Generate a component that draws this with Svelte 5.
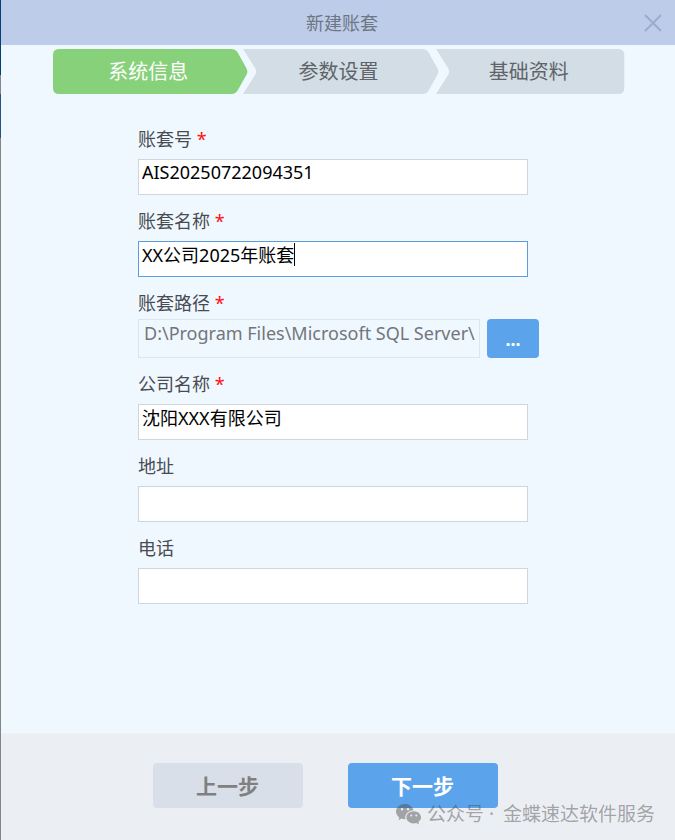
<script>
  import { onMount } from 'svelte';

  const steps = [
    { label: '系统信息', active: true, shape: 'M6 0H178Q182 0 184 3L193 19Q195 23 193 26L184 42Q182 45 178 45H6Q0 45 0 39V6Q0 0 6 0Z' },
    { label: '参数设置', active: false, shape: 'M0 0H179Q183 0 185 3L194 19Q196 23 194 26L185 42Q183 45 179 45H0L12 26Q14 23 12 19Z' },
    { label: '基础资料', active: false, shape: 'M2 0H184Q190 0 190 6V39Q190 45 184 45H2L14 26Q16 23 14 19Z' },
  ];

  let accountNo = $state('AIS20250722094351');
  let accountName = $state('XX公司2025年账套');
  let path = $state('D:\\Program Files\\Microsoft SQL Server\\');
  let company = $state('沈阳XXX有限公司');
  let address = $state('');
  let phone = $state('');

  let nameInput;
  let caretLeft = $state(0);

  // put the caret right behind the typed text
  const moveCaret = () => {
    const ctx = document.createElement('canvas').getContext('2d');
    ctx.font = getComputedStyle(nameInput).font;
    caretLeft = Math.round(ctx.measureText(accountName).width) + 4;
  };

  onMount(moveCaret);
</script>

<svelte:head>
  <title>新建账套</title>
</svelte:head>

<div class="dialog">
  <header class="titlebar">
    <h1>新建账套</h1>
    <button class="close" type="button" aria-label="关闭">
      <svg viewBox="0 0 18 18" width="18" height="18"><path d="M1 1L17 17M17 1L1 17" /></svg>
    </button>
  </header>

  <ol class="steps">
    {#each steps as step}
      <li class="step" class:active={step.active}>
        <svg viewBox="0 0 190 45" preserveAspectRatio="none" aria-hidden="true"><path d={step.shape} /></svg>
        <span>{step.label}</span>
      </li>
    {/each}
  </ol>

  <form class="form" id="account-form">
    <div class="field">
      <label for="account-no">账套号 <b>*</b></label>
      <input id="account-no" type="text" bind:value={accountNo}>
    </div>
    <div class="field">
      <label for="account-name">账套名称 <b>*</b></label>
      <div class="caret-box">
        <input id="account-name" class="current" type="text" bind:this={nameInput} bind:value={accountName} oninput={moveCaret}>
        <i class="caret" style="left: {caretLeft}px"></i>
      </div>
    </div>
    <div class="field path">
      <label for="path">账套路径 <b>*</b></label>
      <div class="path-row">
        <input id="path" type="text" readonly bind:value={path}>
        <button class="browse" type="button" aria-label="浏览">...</button>
      </div>
    </div>
    <div class="field">
      <label for="company">公司名称 <b>*</b></label>
      <input id="company" type="text" bind:value={company}>
    </div>
    <div class="field">
      <label for="address">地址</label>
      <input id="address" type="text" bind:value={address}>
    </div>
    <div class="field">
      <label for="phone">电话</label>
      <input id="phone" type="text" bind:value={phone}>
    </div>
  </form>

  <footer class="footer">
    <button class="prev" type="button">上一步</button>
    <button class="next" type="button">下一步</button>
  </footer>

  <div class="watermark">
    <svg viewBox="0 0 26 21" width="26" height="21" aria-hidden="true">
      <path fill-rule="evenodd" d="M9 0C4 0 0 3.4 0 7.6C0 10 1.3 12.1 3.3 13.5L2.5 16.2L5.6 14.6C6.8 15 8 15.2 9.4 15.2C8.3 10.5 12.3 6.3 17.5 6.2C16.6 2.6 13.2 0 9 0ZM6 4A1.2 1.2 0 1 1 6 6.4A1.2 1.2 0 1 1 6 4ZM12 4A1.2 1.2 0 1 1 12 6.4A1.2 1.2 0 1 1 12 4Z" />
      <path fill-rule="evenodd" d="M17.8 7.2C13.6 7.2 10.4 10 10.4 13.3C10.4 16.7 13.7 19.4 17.8 19.4C18.7 19.4 19.5 19.3 20.3 19L23 20.6L22.3 18.1C24 17 25 15.3 25 13.3C25 10 21.8 7.2 17.8 7.2ZM15.3 10.4A1 1 0 1 1 15.3 12.4A1 1 0 1 1 15.3 10.4ZM20.3 10.4A1 1 0 1 1 20.3 12.4A1 1 0 1 1 20.3 10.4Z" />
    </svg>
    <span>公众号 ·</span>
    <span class="account">金蝶速达软件服务</span>
  </div>
</div>

<style>
  :global(body) {
    background: #f0f8ff;
  }

  .dialog {
    position: relative;
    display: flex;
    flex-direction: column;
    box-sizing: border-box;
    min-height: 100vh;
    padding-left: 1px;
    background: linear-gradient(#004275 0 75px, #8b8587 75px 94px, #2b527e 94px 138px, #858585 138px) left / 1px 100% no-repeat, #f0f8ff;
    color: #484c52;
    font: 18px/24px "Noto Sans", "Noto Sans CJK SC", sans-serif;
  }

  button,
  input {
    box-sizing: border-box;
    font: inherit;
  }

  button {
    padding: 0;
    border: 0;
    cursor: pointer;
  }

  .titlebar {
    display: grid;
    grid-template-columns: 44px 1fr 44px;
    align-items: center;
    height: 45px;
    background: #bdcce9;
  }

  h1 {
    grid-column: 2;
    margin: 0;
    padding-left: 8px;
    color: #6d7683;
    font-size: 18px;
    font-weight: 400;
    text-align: center;
  }

  .close {
    display: grid;
    place-items: center;
    height: 45px;
    background: none;
  }

  .close path {
    fill: none;
    stroke: #98aecb;
    stroke-width: 2;
  }

  .steps {
    display: grid;
    grid-template-columns: repeat(3, 1fr);
    margin: 4px 51px 33px 52px;
    padding: 0;
    list-style: none;
  }

  .step {
    display: grid;
    height: 45px;
    color: #5f646a;
    font-size: 20px;
    line-height: 26px;
    text-align: center;
  }

  .step svg,
  .step span {
    grid-area: 1 / 1;
    align-self: center;
  }

  .step svg {
    width: 100%;
    height: 45px;
    overflow: visible;
    fill: #d3dde5;
  }

  .step span {
    z-index: 1;
  }

  .active {
    color: #fff;
  }

  .active svg {
    fill: #87d17a;
  }

  .form {
    display: flex;
    flex: 1;
    flex-direction: column;
    gap: 14px;
    padding: 0 136px 24px 137px;
  }

  .field {
    display: flex;
    flex-direction: column;
    gap: 8px;
    margin-right: 11px;
  }

  .field b {
    color: #f11;
    font-weight: 400;
  }

  input {
    width: 100%;
    height: 36px;
    padding: 0 3px 10px;
    border: 1px solid #cdd5de;
    border-radius: 0;
    outline: 0;
    background: #fff;
    color: #000;
  }

  .current {
    border-color: #5b9ddd;
  }

  .caret-box {
    position: relative;
    display: flex;
  }

  .caret {
    position: absolute;
    top: 2px;
    width: 1px;
    height: 23px;
    background: #000;
  }

  .field.path {
    gap: 4px;
    margin-right: 0;
  }

  .path-row {
    display: flex;
    gap: 7px;
  }

  .path-row input {
    flex: 1;
    min-width: 0;
    height: 39px;
    padding: 0 3px 12px 5px;
    border-color: #dde5ee;
    background: #f0f8ff;
    color: #72767b;
  }

  .browse {
    width: 52px;
    height: 39px;
    border-radius: 4px;
    background: #5ba4eb;
    color: #fff;
    font-weight: 700;
  }

  .footer {
    display: flex;
    justify-content: center;
    gap: 45px;
    padding: 29px 26px 32px 0;
    border-top: 1px solid #edf1f6;
    background: #ebeef3;
  }

  .footer button {
    width: 150px;
    height: 45px;
    border-radius: 4px;
    font-size: 21px;
    font-weight: 700;
  }

  .prev {
    background: #d9dfe8;
    color: #808080;
  }

  .next {
    background: #5ba4eb;
    color: #fff;
  }

  .watermark {
    position: absolute;
    right: 20px;
    bottom: 14px;
    display: flex;
    gap: 5px;
    align-items: center;
    color: rgba(70, 70, 70, 0.45);
    font-size: 19px;
    pointer-events: none;
  }

  .watermark svg {
    fill: currentColor;
  }

  .account {
    padding-left: 4px;
  }
</style>
